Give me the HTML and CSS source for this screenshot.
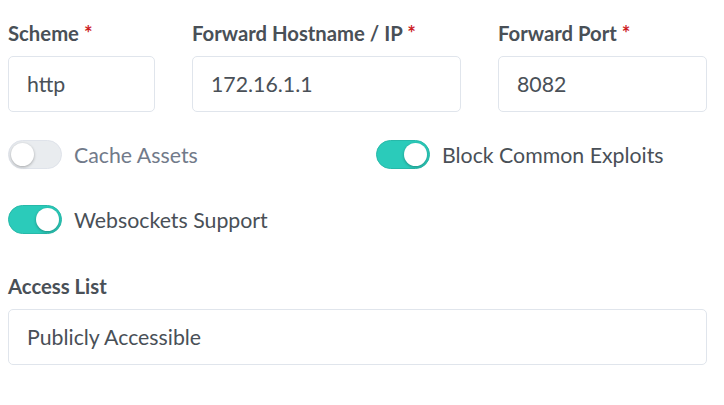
FILE: index.html
```html
<html>
<head>
    <meta name="viewport" content="width=device-width, initial-scale=1"/>
    <title>Edit Proxy Host</title>
    <link rel="stylesheet" href="styles.css">
</head>
<body>
    <form class="host-form">
        <div class="row three">
            <div class="field">
                <label class="form-label">Scheme <span class="req">*</span></label>
                <input class="form-control" type="text" value="http">
            </div>
            <div class="field">
                <label class="form-label">Forward Hostname / IP <span class="req">*</span></label>
                <input class="form-control" type="text" value="172.16.1.1">
            </div>
            <div class="field">
                <label class="form-label">Forward Port <span class="req">*</span></label>
                <input class="form-control" type="text" value="8082">
            </div>
        </div>

        <div class="row two switches first">
            <label class="switch">
                <input type="checkbox">
                <span class="switch-track"></span>
                <span class="switch-text">Cache Assets</span>
            </label>
            <label class="switch">
                <input type="checkbox" checked>
                <span class="switch-track"></span>
                <span class="switch-text">Block Common Exploits</span>
            </label>
        </div>

        <div class="row two switches second">
            <label class="switch">
                <input type="checkbox" checked>
                <span class="switch-track"></span>
                <span class="switch-text">Websockets Support</span>
            </label>
        </div>

        <div class="field access">
            <label class="form-label">Access List</label>
            <input class="form-control" type="text" value="Publicly Accessible">
        </div>
    </form>
</body>
</html>
```

FILE: styles.css
```css
body{
    margin: 0;
    background: #fff;
    font-family: Lato, "Open Sans", sans-serif;
    color: #495057;
}
.host-form{
    padding: 19px 17px 0 8px;
}
.row{
    display: grid;
    column-gap: 37px;
}
.row.three{
    grid-template-columns: 147px 269px 1fr;
}
.row.two{
    grid-template-columns: 1fr 1fr;
}
.form-label{
    display: block;
    font-size: 20.3px;
    font-weight: 700;
    line-height: 28px;
    margin-bottom: 9px;
    color: #495057;
}
.req{
    color: #cd201f;
}
.form-control{
    display: block;
    width: 100%;
    height: 56px;
    box-sizing: border-box;
    padding: 0 18px;
    border: 1px solid #e0e5ec;
    border-radius: 5px;
    background: #fff;
    font-family: inherit;
    font-size: 21.3px;
    color: #495057;
    outline: none;
}
.switches.first{
    margin-top: 28px;
}
.switches.second{
    margin-top: 36px;
}
.switch{
    display: flex;
    align-items: center;
    height: 29px;
    cursor: pointer;
}
.switch input{
    display: none;
}
.switch-track{
    position: relative;
    width: 54px;
    height: 29px;
    box-sizing: border-box;
    border: 1px solid #dfe3ea;
    border-radius: 15px;
    background: #e9ecef;
    flex-shrink: 0;
}
.switch-track::after{
    content: "";
    position: absolute;
    top: 2px;
    left: 2px;
    width: 23px;
    height: 23px;
    border-radius: 50%;
    background: #fff;
    box-shadow: 0 1px 3px rgba(0,0,0,.3);
}
.switch input:checked + .switch-track{
    background: #2bcbba;
    border-color: #27b9a9;
}
.switch input:checked + .switch-track::after{
    left: 27px;
}
.switch-text{
    margin-left: 12px;
    font-size: 21.3px;
    color: #717a8a;
}
.switch input:checked ~ .switch-text{
    color: #495057;
}
.access{
    margin-top: 38px;
}
```
